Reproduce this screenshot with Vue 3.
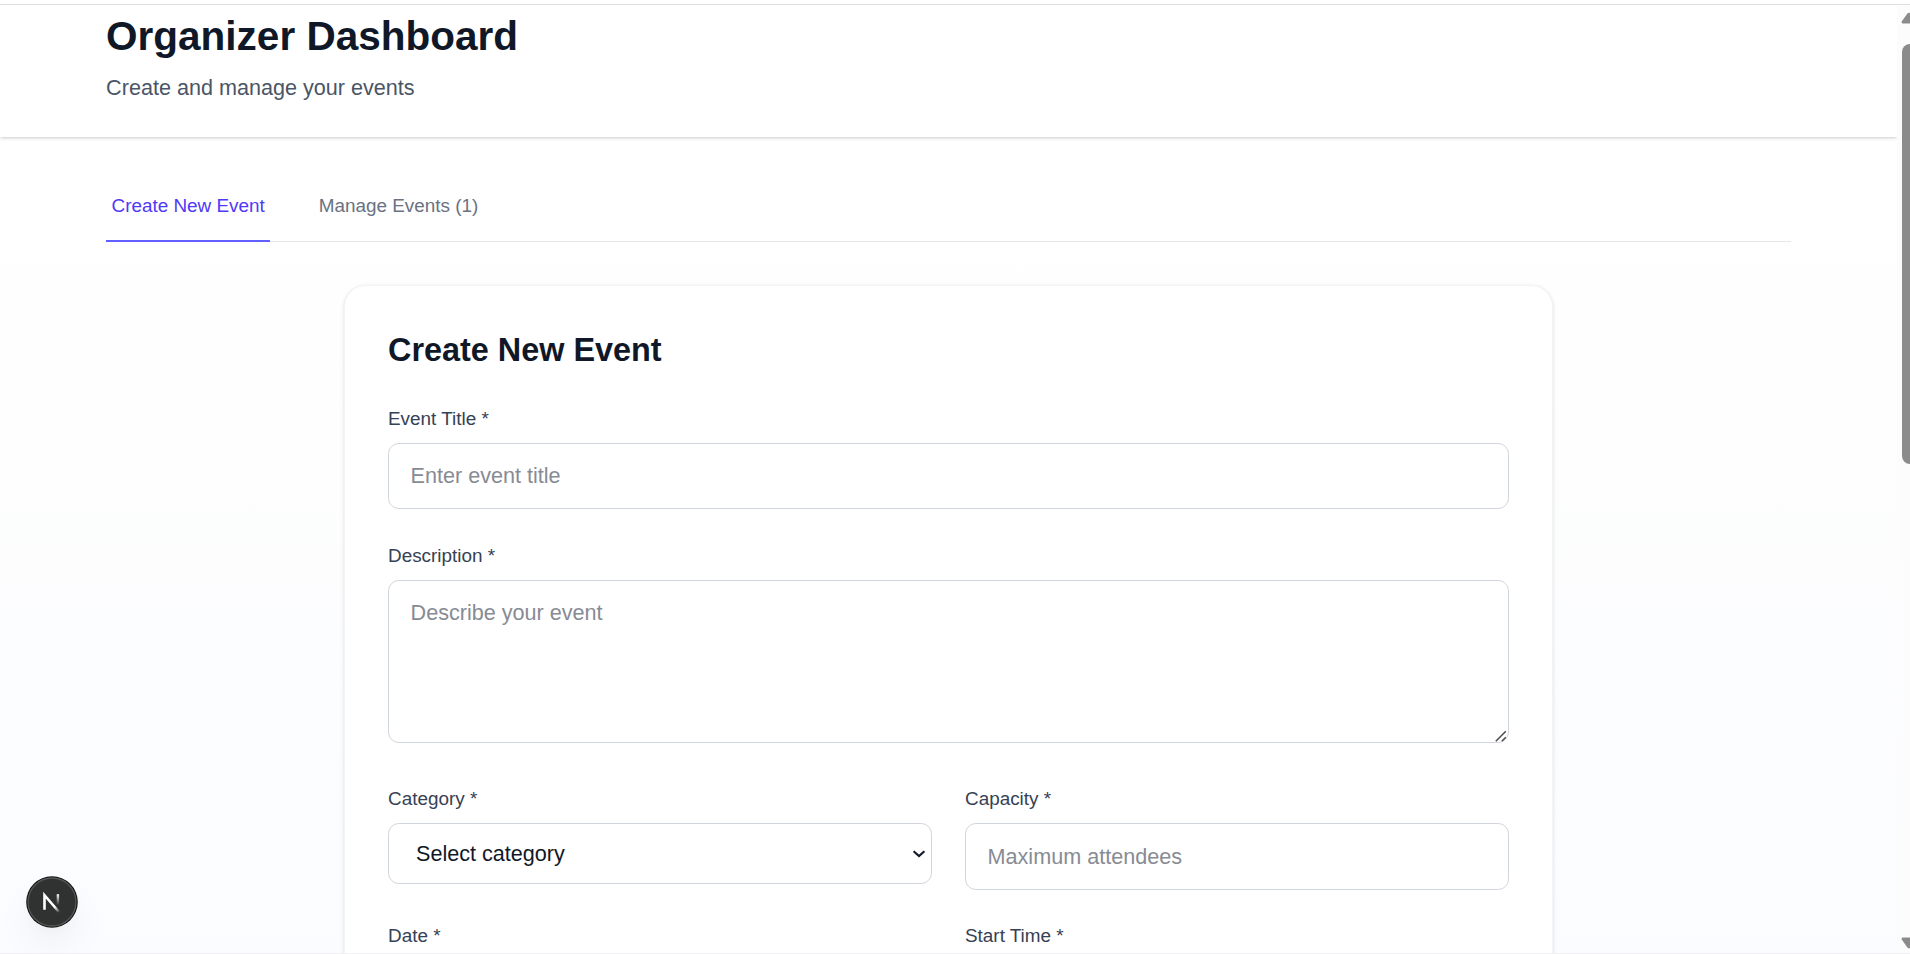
<script setup>
import { ref } from 'vue'

const tabs = [
  { id: 'create', label: 'Create New Event' },
  { id: 'manage', label: 'Manage Events (1)' },
]
const active = ref('create')
const title = ref('')
const description = ref('')
const category = ref('')
const capacity = ref('')
</script>

<template>
  <div class="window">
    <div class="viewport">
      <main class="page">
        <header class="header">
          <div class="container">
            <h1>Organizer Dashboard</h1>
            <p>Create and manage your events</p>
          </div>
        </header>

        <div class="container body">
          <nav class="tabs">
            <button
              v-for="tab in tabs"
              :key="tab.id"
              type="button"
              class="tab"
              :class="{ active: active === tab.id }"
              @click="active = tab.id"
            >{{ tab.label }}</button>
          </nav>

          <section class="card">
            <h2>Create New Event</h2>
            <form class="form" @submit.prevent>
              <div class="field">
                <label for="title">Event Title *</label>
                <input id="title" v-model="title" class="control" type="text" placeholder="Enter event title" />
              </div>

              <div class="field description">
                <label for="description">Description *</label>
                <div class="area">
                  <textarea id="description" v-model="description" class="control" placeholder="Describe your event"></textarea>
                  <svg class="grip" width="12" height="12" viewBox="0 0 12 12">
                    <path d="M.8 11.2 10.8 1.2M6.8 11.2l4-4" fill="none" stroke="#4a4a4a" stroke-width="1.5" />
                  </svg>
                </div>
              </div>

              <div class="row">
                <div class="field">
                  <label for="category">Category *</label>
                  <div class="select">
                    <select id="category" v-model="category" class="control">
                      <option value="">Select category</option>
                    </select>
                    <svg class="chevron" width="14" height="10" viewBox="0 0 14 10">
                      <path d="M1.6 2.2 7 7l5.4-4.8" fill="none" stroke="#101828" stroke-width="2.1" />
                    </svg>
                  </div>
                </div>
                <div class="field">
                  <label for="capacity">Capacity *</label>
                  <input id="capacity" v-model="capacity" class="control capacity" type="text" placeholder="Maximum attendees" />
                </div>
              </div>

              <div class="row last">
                <div class="field"><label>Date *</label></div>
                <div class="field"><label>Start Time *</label></div>
              </div>
            </form>
          </section>
        </div>
      </main>

      <aside class="scrollbar">
        <svg class="arrow" width="16" height="12" viewBox="0 0 16 12">
          <path d="M6.6 1.2Q8 .2 9.4 1.2L15.3 9.6Q15.6 11.2 14.4 11.4H1.6Q.4 11.2.7 9.6Z" fill="#8b8b8b" />
        </svg>
        <div class="thumb"></div>
        <svg class="arrow down" width="16" height="12" viewBox="0 0 16 12">
          <path d="M6.6 10.8Q8 11.8 9.4 10.8L15.3 2.4Q15.6.8 14.4.6H1.6Q.4.8.7 2.4Z" fill="#8b8b8b" />
        </svg>
      </aside>
    </div>

    <button class="dev-badge" type="button" aria-label="Open developer tools">
      <svg width="52" height="52" viewBox="0 0 52 52">
        <defs>
          <linearGradient id="diag" x1="27" y1="27" x2="33.5" y2="35.5" gradientUnits="userSpaceOnUse">
            <stop stop-color="#fff" />
            <stop offset=".4" stop-color="#fff" />
            <stop offset="1" stop-color="#fff" stop-opacity=".1" />
          </linearGradient>
          <linearGradient id="stem" x1="32" y1="18" x2="32" y2="29" gradientUnits="userSpaceOnUse">
            <stop stop-color="#fff" />
            <stop offset="1" stop-color="#fff" stop-opacity="0" />
          </linearGradient>
        </defs>
        <circle cx="26" cy="26" r="25.8" fill="#111" />
        <circle cx="26" cy="26" r="24" fill="#303231" stroke="#555756" stroke-width="1.3" />
        <path d="M18.5 33.8V19.2L33 36" fill="none" stroke="url(#diag)" stroke-width="2.6" />
        <path d="M31.9 18.2V29" fill="none" stroke="url(#stem)" stroke-width="2.4" />
      </svg>
    </button>
  </div>
</template>

<style>
html,
body {
  margin: 0;
  overflow: hidden;
}
</style>

<style scoped>
* {
  box-sizing: border-box;
}

.window {
  position: relative;
  height: 954px;
  overflow: hidden;
  padding-top: 4px;
  background: #fff;
  border-bottom: 1px solid #f0f0f3;
  font-family: "Liberation Sans", Arial, sans-serif;
  color: #101828;
}

.viewport {
  display: flex;
  height: 949px;
  border-top: 1px solid #dedede;
}

.page {
  flex: 1;
  min-width: 0;
  overflow: hidden;
  background: linear-gradient(180deg, #fff 0%, #fefefe 40%, #fbfcff 100%);
}

.container {
  max-width: 1728px;
  margin: 0 auto;
  padding: 0 21.6px;
}

.header {
  height: 132px;
  background: #fff;
  box-shadow: 0 1.35px 4px rgba(0, 0, 0, 0.14), 0 1.35px 2.7px -0.5px rgba(0, 0, 0, 0.14);
}

h1 {
  margin: 0;
  padding-top: 7px;
  font-size: 40.5px;
  line-height: 48px;
  font-weight: 700;
}

.header p {
  margin: 12px 0 0;
  font-size: 21.6px;
  line-height: 32px;
  color: #4a5565;
}

.tabs {
  display: flex;
  gap: 43.2px;
  margin-top: 32px;
  border-bottom: 1px solid #e5e7eb;
}

.tab {
  height: 73px;
  margin-bottom: -1px;
  padding: 1px 5.4px 0;
  border: 0;
  border-bottom: 2px solid transparent;
  background: none;
  font: 18.9px/27px "Liberation Sans", Arial, sans-serif;
  color: #6a7282;
}

.tab.active {
  color: #4f39f6;
  border-bottom-color: #615fff;
}

.card {
  width: 1209px;
  height: 900px;
  margin: 43px 0 0 237.9px;
  padding: 43px;
  border: 1px solid #f3f4f6;
  border-radius: 21.6px;
  background: #fff;
  box-shadow: 0 1.35px 4px rgba(0, 0, 0, 0.1), 0 1.35px 2.7px -1.35px rgba(0, 0, 0, 0.1);
}

h2 {
  margin: 0 0 33px;
  font-size: 32.4px;
  line-height: 43px;
  font-weight: 700;
}

.form {
  display: flex;
  flex-direction: column;
  gap: 33px;
}

.field label {
  display: block;
  margin-bottom: 11px;
  font-size: 18.9px;
  line-height: 27px;
  color: #364153;
}

.control {
  display: block;
  width: 100%;
  height: 66px;
  margin: 0;
  padding: 16px 21.6px;
  border: 1px solid #d1d5dc;
  border-radius: 10.8px;
  outline: none;
  background: #fff;
  font: 21.6px/32px "Liberation Sans", Arial, sans-serif;
  color: #101828;
}

.control::placeholder {
  color: #878b94;
  opacity: 1;
}

.capacity {
  height: 67px;
}

.description {
  padding-bottom: 9px;
}

.area,
.select {
  position: relative;
}

textarea.control {
  height: 163px;
  resize: none;
}

.grip {
  position: absolute;
  right: 2px;
  bottom: 1px;
}

.row {
  display: grid;
  grid-template-columns: 1fr 1fr;
  gap: 33px;
}

.row.last {
  margin-top: -1px;
}

select.control {
  height: 61px;
  padding: 0 27px;
  appearance: none;
}

.chevron {
  position: absolute;
  right: 6px;
  top: 26px;
}

.scrollbar {
  display: flex;
  flex-direction: column;
  width: 13px;
  padding: 7px 0 4px 4px;
  overflow: hidden;
  background: #fcfcfc;
}

.arrow {
  flex: none;
}

.thumb {
  flex: none;
  width: 16px;
  height: 420px;
  margin: 20px 0 0 1px;
  border-radius: 8px;
  background: #8b8b8b;
}

.down {
  margin-top: auto;
}

.dev-badge {
  position: absolute;
  left: 25.6px;
  top: 876.4px;
  width: 52px;
  height: 52px;
  padding: 0;
  border: 0;
  border-radius: 50%;
  background: none;
  box-shadow: 0 20px 40px -6px rgba(0, 0, 0, 0.08), 0 6px 16px -6px rgba(0, 0, 0, 0.04);
}

.dev-badge svg {
  display: block;
}
</style>
